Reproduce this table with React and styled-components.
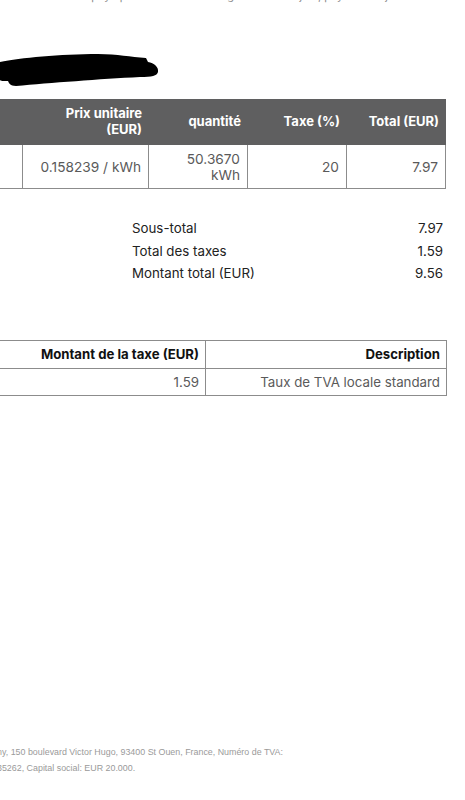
import React from "react";
import styled, { createGlobalStyle } from "styled-components";

const GlobalStyle = createGlobalStyle`
  html, body {
    margin: 0;
    padding: 0;
    background: #fff;
  }
  body {
    font-family: Inter, "Liberation Sans", Arial, sans-serif;
    -webkit-font-smoothing: antialiased;
  }
  th, td {
    box-sizing: border-box;
  }
`;

const Page = styled.div`
  width: 465px;
  height: 800px;
  overflow: hidden;
  position: relative;
  background: #fff;
  display: flex;
  flex-direction: column;
`;

const CutLine = styled.div`
  margin-top: -11px;
  height: 14px;
  line-height: 14px;
  font-size: 11px;
  color: #8a8a8a;
  text-align: center;
  white-space: nowrap;
  padding-left: 30px;
`;

const Redaction = styled.svg`
  display: block;
  margin-top: 50px;
  width: 160px;
  height: 36px;
`;

const ItemsTable = styled.table`
  border-collapse: collapse;
  table-layout: fixed;
  margin-top: 10px;
  margin-left: -38px;
  width: 483px;
`;

const HeadCell = styled.th`
  width: ${(p) => p.w}px;
  background: #5f5f60;
  color: #fff;
  font-weight: 700;
  font-size: 13px;
  line-height: 16px;
  text-align: right;
  vertical-align: middle;
  padding: 4px 6px 6px 6px;
  height: 45px;
  border: 1px solid #5f5f60;
`;

const BodyCell = styled.td`
  color: #5a5a5a;
  font-size: 13.7px;
  line-height: 16px;
  text-align: right;
  vertical-align: middle;
  padding: 4px 7px 4px 6px;
  height: 44px;
  border: 1px solid #8c8c8c;
`;

const Summary = styled.div`
  margin: 31px 22px 0 132px;
  display: grid;
  grid-template-columns: 1fr auto;
  row-gap: 5px;
  font-size: 13.3px;
  line-height: 17.5px;
  color: #222;
`;

const SumValue = styled.div`
  text-align: right;
`;

const TaxTable = styled.table`
  border-collapse: collapse;
  table-layout: fixed;
  margin-top: 57px;
  margin-left: -30px;
  width: 476px;
`;

const TaxHead = styled.th`
  width: ${(p) => p.w}px;
  font-size: 13.2px;
  font-weight: 700;
  color: #111;
  text-align: right;
  padding: 4px 6px;
  height: 28px;
  border: 1px solid #8c8c8c;
`;

const TaxCell = styled.td`
  font-size: 13.3px;
  color: #5a5a5a;
  text-align: right;
  padding: 4px 6px;
  height: 27px;
  border: 1px solid #8c8c8c;
`;

const Footer = styled.div`
  margin-top: auto;
  margin-bottom: 24px;
  font-family: "Liberation Sans", Arial, sans-serif;
  font-size: 8.9px;
  line-height: 16px;
  color: #9a9a9a;
  white-space: nowrap;
  margin-left: -3px;
`;

const items = [
  { price: "0.158239 / kWh", qty: ["50.3670", "kWh"], tax: "20", total: "7.97" },
];

const summary = [
  ["Sous-total", "7.97"],
  ["Total des taxes", "1.59"],
  ["Montant total (EUR)", "9.56"],
];

export default function App() {
  return (
    <>
      <GlobalStyle />
      <Page>
        <CutLine>
          payé par Visa ····  ·  facture générée le 12 juin, payée le 12 juin
        </CutLine>

        <Redaction viewBox="0 0 160 36">
          <path
            d="M0 9 C 20 5, 60 1, 98 1 C 118 1, 130 4, 146 5 L 148 9 C 154 10, 159 14, 158 19 C 157 23, 152 24, 140 24 C 100 26, 50 30, 16 33 C 10 33, 9 30, 8 28 C 4 28, 0 28, 0 27 Z"
            fill="#000"
          />
        </Redaction>

        <ItemsTable>
          <thead>
            <tr>
              <HeadCell w={60}></HeadCell>
              <HeadCell w={126}>
                Prix unitaire
                <br />
                (EUR)
              </HeadCell>
              <HeadCell w={99}>quantité</HeadCell>
              <HeadCell w={99}>Taxe (%)</HeadCell>
              <HeadCell w={99}>Total (EUR)</HeadCell>
            </tr>
          </thead>
          <tbody>
            {items.map((it, i) => (
              <tr key={i}>
                <BodyCell></BodyCell>
                <BodyCell>{it.price}</BodyCell>
                <BodyCell>
                  {it.qty[0]}
                  <br />
                  {it.qty[1]}
                </BodyCell>
                <BodyCell>{it.tax}</BodyCell>
                <BodyCell>{it.total}</BodyCell>
              </tr>
            ))}
          </tbody>
        </ItemsTable>

        <Summary>
          {summary.map(([label, value]) => (
            <React.Fragment key={label}>
              <div>{label}</div>
              <SumValue>{value}</SumValue>
            </React.Fragment>
          ))}
        </Summary>

        <TaxTable>
          <thead>
            <tr>
              <TaxHead w={235}>Montant de la taxe (EUR)</TaxHead>
              <TaxHead w={241}>Description</TaxHead>
            </tr>
          </thead>
          <tbody>
            <tr>
              <TaxCell>1.59</TaxCell>
              <TaxCell>Taux de TVA locale standard</TaxCell>
            </tr>
          </tbody>
        </TaxTable>

        <Footer>
          ny, 150 boulevard Victor Hugo, 93400 St Ouen, France, Numéro de TVA:
          <br />
          35262, Capital social: EUR 20.000.
        </Footer>
      </Page>
    </>
  );
}
